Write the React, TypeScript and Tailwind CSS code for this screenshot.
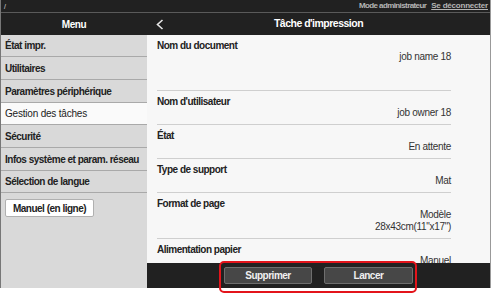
import React from "react";

const menu: { label: string; h: string; active?: boolean }[] = [
  { label: "État impr.", h: "h-[22px]" },
  { label: "Utilitaires", h: "h-[23px]" },
  { label: "Paramètres périphérique", h: "h-[23px]" },
  { label: "Gestion des tâches", h: "h-[22px]", active: true },
  { label: "Sécurité", h: "h-[23px]" },
  { label: "Infos système et param. réseau", h: "h-[23px]" },
  { label: "Sélection de langue", h: "h-[22px]" },
];

const items: { label: string; values: string[]; first?: boolean }[] = [
  { label: "Nom du document", values: ["job name 18"], first: true },
  { label: "Nom d'utilisateur", values: ["job owner 18"] },
  { label: "État", values: ["En attente"] },
  { label: "Type de support", values: ["Mat"] },
  { label: "Format de page", values: ["Modèle", "28x43cm(11\"x17\")"] },
  { label: "Alimentation papier", values: ["Manuel"] },
];

export default function App() {
  return (
    <div
      className="relative w-[491px] h-[295px] bg-white overflow-hidden"
      style={{ fontFamily: '"Liberation Sans", Arial, sans-serif' }}
    >
      <div className="flex flex-col h-[288px] border-l border-l-[#777] border-r border-r-[#999]">
        {/* top bar */}
        <div className="h-[12px] bg-[#212121] flex items-center justify-between pl-[3px] pr-[2px]">
          <span className="text-[7px] leading-[7px] text-[#ddd]">/</span>
          <div className="flex items-center gap-[5px] text-[8px] leading-[8px] font-bold tracking-[-0.6px] text-[#b5b5b5]">
            <span>Mode administrateur</span>
            <span className="underline tracking-[-0.2px]">Se déconnecter</span>
          </div>
        </div>
        <div className="h-px bg-[#5a5a5a]" />
        {/* header */}
        <div className="h-[22px] bg-[#212121] flex text-white">
          <div className="w-[146px] flex items-center justify-center text-[10px] font-bold tracking-[-0.4px]">
            Menu
          </div>
          <div className="flex-1 relative flex items-center justify-center text-[10.5px] font-bold tracking-[-0.5px]">
            <svg
              className="absolute left-[9px] top-[6px]"
              width="8"
              height="11"
              viewBox="0 0 8 11"
              fill="none"
            >
              <path d="M6.5 1 L1.5 5.5 L6.5 10" stroke="#e6e6e6" strokeWidth="1.6" />
            </svg>
            <span>Tâche d'impression</span>
          </div>
        </div>
        {/* body */}
        <div className="flex-1 flex min-h-0">
          <div className="w-[146px] bg-[#d9d9d9] flex flex-col">
            {menu.map((m) => (
              <div
                key={m.label}
                className={`${m.h} flex items-center pl-[4px] border-b border-b-[#a9a9a9] text-[10px] whitespace-nowrap text-[#222] ${
                  m.active ? "bg-[#fafafa] font-normal tracking-[-0.2px]" : "font-bold tracking-[-0.5px]"
                }`}
              >
                {m.label}
              </div>
            ))}
            <div className="pt-[6px] pl-[4px]">
              <div className="w-[89px] h-[18px] bg-white border border-[#b0b0b0] rounded-[2px] flex items-center justify-center text-[10px] font-bold tracking-[-0.5px] text-[#222]">
                Manuel (en ligne)
              </div>
            </div>
          </div>
          <div className="flex-1 flex flex-col bg-[#f7f7f7] min-w-0">
            <div className="flex-1 overflow-hidden pl-[10px] pr-[39px]">
              {items.map((it) => (
                <div
                  key={it.label}
                  className={`pt-[5px] border-b border-b-[#cfcfcf] ${it.first ? "pb-[27px]" : "pb-[5px]"}`}
                >
                  <div className="text-[10px] leading-[11px] font-bold tracking-[-0.5px] text-[#222]">
                    {it.label}
                  </div>
                  {it.values.map((v) => (
                    <div
                      key={v}
                      className="text-[10px] leading-[12px] text-right tracking-[-0.3px] text-[#333]"
                    >
                      {v}
                    </div>
                  ))}
                </div>
              ))}
            </div>
            <div className="h-[25px] bg-[#212121] flex items-center justify-center gap-[12px]">
              <div className="w-[88px] h-[17px] bg-[#474747] border border-[#6e6e6e] rounded-[2px] flex items-center justify-center text-[10px] font-bold tracking-[-0.5px] text-[#f0f0f0]">
                Supprimer
              </div>
              <div className="w-[89px] h-[17px] bg-[#474747] border border-[#6e6e6e] rounded-[2px] flex items-center justify-center text-[10px] font-bold tracking-[-0.5px] text-[#f0f0f0]">
                Lancer
              </div>
            </div>
          </div>
        </div>
      </div>
      {/* highlight */}
      <div className="absolute left-[219px] top-[261px] w-[198px] h-[32px] border-2 border-[#e3141b] rounded-[5px] pointer-events-none" />
    </div>
  );
}
